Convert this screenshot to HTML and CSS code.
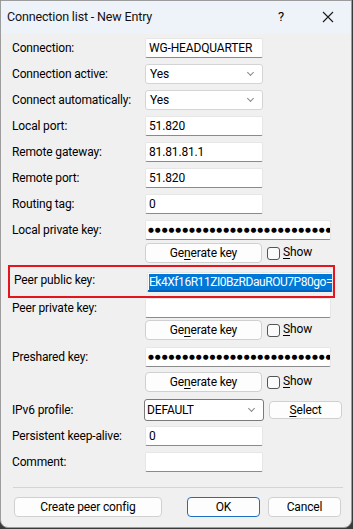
FILE: index.html
```html
<!DOCTYPE html>
<html>
<head>
<meta charset="utf-8">
<link rel="stylesheet" href="styles.css">
</head>
<body>
<div class="window">
  <div class="titlebar">
    <span class="title">Connection list - New Entry</span>
    <span class="help">?</span>
    <span class="close"><svg width="12" height="12" viewBox="0 0 12 12"><path d="M1 1L11 11M11 1L1 11" stroke="#1a1a1a" stroke-width="1.1" fill="none"/></svg></span>
  </div>
  <div class="content">
    <div class="row r1"><label class="lbl">Connection:</label><div class="input short">WG-HEADQUARTER</div></div>
    <div class="row"><label class="lbl">Connection active:</label><div class="select short">Yes<span class="chev"></span></div></div>
    <div class="row"><label class="lbl">Connect automatically:</label><div class="select short">Yes<span class="chev"></span></div></div>
    <div class="row"><label class="lbl">Local port:</label><div class="input short">51.820</div></div>
    <div class="row"><label class="lbl">Remote gateway:</label><div class="input short">81.81.81.1</div></div>
    <div class="row"><label class="lbl">Remote port:</label><div class="input short">51.820</div></div>
    <div class="row"><label class="lbl">Routing tag:</label><div class="input short">0</div></div>
    <div class="row"><label class="lbl">Local private key:</label><div class="input long dots">●●●●●●●●●●●●●●●●●●●●●●●●●●●</div></div>
    <div class="row gen g1"><span class="lbl"></span><div class="btn genbtn">Ge<u>n</u>erate key</div><span class="check"></span><span class="show"><u>S</u>how</span></div>
    <div class="row redbox"><label class="lbl">Peer public key:</label><div class="input long sel"><span class="hl">Ek4Xf16R11ZI0BzRDauROU7P80go=</span></div></div>
    <div class="row r-after"><label class="lbl">Peer private key:</label><div class="input long"></div></div>
    <div class="row gen g2"><span class="lbl"></span><div class="btn genbtn">Ge<u>n</u>erate key</div><span class="check"></span><span class="show"><u>S</u>how</span></div>
    <div class="row r-psk"><label class="lbl">Preshared key:</label><div class="input long dots">●●●●●●●●●●●●●●●●●●●●●●●●●●●</div></div>
    <div class="row gen g3"><span class="lbl"></span><div class="btn genbtn">Ge<u>n</u>erate key</div><span class="check"></span><span class="show"><u>S</u>how</span></div>
    <div class="row r-ipv6"><label class="lbl">IPv6 profile:</label><div class="select short focus">DEFAULT<span class="chev"></span></div><div class="btn selbtn"><u>S</u>elect</div></div>
    <div class="row r-ka"><label class="lbl">Persistent keep-alive:</label><div class="input short">0</div></div>
    <div class="row"><label class="lbl">Comment:</label><div class="input short"></div></div>
    <div class="sep"></div>
    <div class="footer">
      <div class="btn peerbtn">Create peer config</div>
      <div class="spacer"></div>
      <div class="btn okbtn">OK</div>
      <div class="btn cancelbtn">Cancel</div>
    </div>
  </div>
</div>
</body>
</html>
```
FILE: styles.css
```css
html, body {
  margin: 0;
  padding: 0;
  background: #3a3a3a;
}
body {
  width: 353px;
  height: 529px;
  overflow: hidden;
  font-family: Roboto, "Liberation Sans", Arial, sans-serif;
  font-size: 12px;
  letter-spacing: -0.15px;
  color: #000;
}
.window {
  width: 350px;
  height: 526px;
  background: #f0f0f0;
  border: 1px solid #9c9c9c;
  border-radius: 0 0 8px 8px;
  overflow: hidden;
}
.titlebar {
  height: 33px;
  background: #eef2f9;
  display: flex;
  align-items: center;
  box-sizing: border-box;
  padding-left: 6px;
  padding-bottom: 2px;
}
.title {
  font-size: 12.5px;
  flex: 1;
  color: #111;
}
.help {
  width: 14px;
  text-align: center;
  font-size: 13px;
  margin-right: 34px;
}
.close {
  width: 12px;
  height: 12px;
  margin-right: 17px;
  display: flex;
}
.content {
  padding: 4px 0 0 11px;
}
.row {
  display: flex;
  align-items: center;
  height: 20px;
  margin-top: 6px;
}
.row.r1 { margin-top: 0; }
.lbl {
  width: 133px;
  flex: none;
  white-space: nowrap;
}
.input, .select {
  height: 20px;
  box-sizing: border-box;
  background: #fff;
  display: flex;
  align-items: center;
  padding-left: 3px;
  white-space: nowrap;
  overflow: hidden;
}
.input {
  border: 1px solid #e6e6e6;
  border-bottom-color: #8a8a8a;
  border-radius: 2px;
}
.select {
  border: 1px solid #d4d4d4;
  border-radius: 3px;
  position: relative;
  padding-left: 4px;
}
.select.focus {
  border-color: #7a7a7a;
  height: 22px;
  margin-left: -1px;
  width: 120px;
  padding-left: 2px;
}
.chev {
  position: absolute;
  right: 9px;
  top: 5px;
  width: 4px;
  height: 4px;
  border-right: 1px solid #888;
  border-bottom: 1px solid #888;
  transform: rotate(45deg);
}
.focus .chev { top: 6px; }
.short { width: 118px; }
.long { width: 186px; }
.dots {
  font-family: "DejaVu Sans", sans-serif;
  font-size: 6.8px;
  letter-spacing: 0.9px;
  padding-left: 2px;
}
.gen { margin-top: 3px; }
.g2 { margin-top: 2px; }
.g3 { margin-top: 5px; }
.r-psk { margin-top: 7px; }
.r-ipv6 { margin-top: 7px; height: 22px; }
.r-ka { margin-top: 5px; }
.btn {
  height: 20px;
  box-sizing: border-box;
  background: #fdfdfd;
  border: 1px solid #d0d0d0;
  border-radius: 4px;
  display: flex;
  align-items: center;
  justify-content: center;
}
.genbtn { width: 117px; }
.check {
  width: 11px;
  height: 11px;
  border: 1px solid #555;
  border-radius: 3px;
  background: #fbfbfb;
  margin-left: 5px;
  flex: none;
}
.show {
  margin-left: 3px;
  margin-top: -3px;
}
.redbox {
  height: 27px;
  margin-top: 2px;
  margin-left: -4px;
  width: 319px;
  border: 2px solid #e3151f;
  padding-left: 4px;
  box-sizing: content-box;
  align-items: flex-start;
  padding-top: 2px;
}
.redbox .lbl { margin-top: 4px; }
.redbox .input { margin-top: 3px; }
.sel {
  width: 187px;
  border-bottom: 2px solid #005fb8;
  padding-left: 1px;
}
.hl {
  background: #0078d7;
  color: #fff;
  padding: 1px 1px 1px 0;
  letter-spacing: -0.45px;
}
.r-after { margin-top: 0; }
.selbtn {
  width: 73px;
  height: 18px;
  margin-left: 5px;
}
.sep {
  width: 330px;
  height: 1px;
  background: #d4d4d4;
  margin-top: 15px;
  margin-left: 1px;
}
.footer {
  display: flex;
  margin-top: 9px;
  margin-left: 2px;
  width: 327px;
}
.peerbtn { width: 148px; }
.spacer { flex: 1; }
.okbtn { width: 73px; border-color: #1b6fc0; margin-right: 8px; }
.cancelbtn { width: 73px; }
u { text-decoration-thickness: 1px; text-underline-offset: 2px; }
```
